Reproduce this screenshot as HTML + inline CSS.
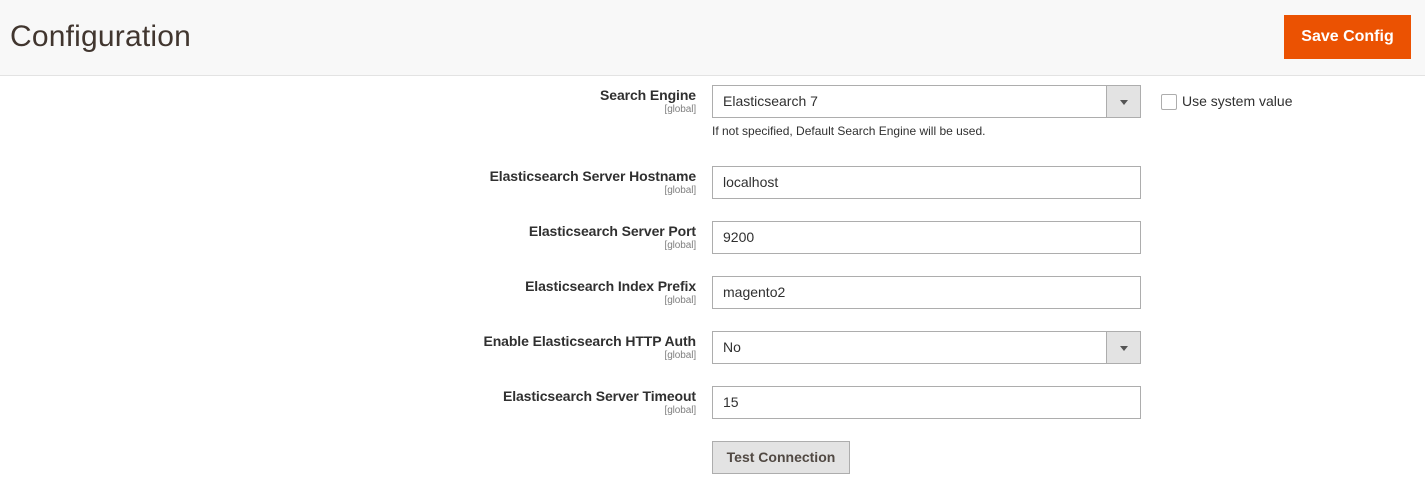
<!DOCTYPE html>
<html><head><style>
body{margin:0;width:1425px;height:486px;background:#fff;font-family:"Liberation Sans",sans-serif;color:#303030;position:relative;overflow:hidden}
.hdr{position:absolute;left:0;top:0;width:1425px;height:75px;background:#f8f8f8;border-bottom:1px solid #e3e3e3}
.title{position:absolute;left:10px;top:20px;font-size:30px;color:#41362f;letter-spacing:0.2px}
.save{position:absolute;left:1284px;top:15px;width:127px;height:44px;background:#eb5202;color:#fff;font-weight:bold;font-size:16px;line-height:44px;text-align:center}
.lab{position:absolute;right:729px;text-align:right;font-weight:bold;font-size:14px;color:#303030;letter-spacing:-0.1px}
.lab small{display:block;font-weight:normal;font-size:10px;color:#808080;margin-top:1px}
.inp{position:absolute;left:712px;height:31px;border:1px solid #adadad;font-size:14px;line-height:31px;padding-left:10px;box-sizing:content-box;width:417px;color:#303030}
.arr{position:absolute;right:0;top:0;width:33px;height:31px;background:#e3e3e3;border-left:1px solid #adadad}
.arr:after{content:"";position:absolute;left:13px;top:14px;border-left:4px solid transparent;border-right:4px solid transparent;border-top:5px solid #555}
</style></head><body>
<div class="hdr"><div class="title">Configuration</div><div class="save">Save Config</div></div>

<div class="lab" style="top:87px">Search Engine<small>[global]</small></div>
<div class="inp" style="top:85px">Elasticsearch 7<div class="arr"></div></div>
<div style="position:absolute;left:1161px;top:94px;width:14px;height:14px;border:1px solid #adadad;border-radius:2px"></div>
<div style="position:absolute;left:1182px;top:93px;font-size:14px">Use system value</div>
<div style="position:absolute;left:712px;top:124px;font-size:12px">If not specified, Default Search Engine will be used.</div>

<div class="lab" style="top:168px">Elasticsearch Server Hostname<small>[global]</small></div>
<div class="inp" style="top:166px">localhost</div>
<div class="lab" style="top:223px">Elasticsearch Server Port<small>[global]</small></div>
<div class="inp" style="top:221px">9200</div>
<div class="lab" style="top:278px">Elasticsearch Index Prefix<small>[global]</small></div>
<div class="inp" style="top:276px">magento2</div>
<div class="lab" style="top:333px">Enable Elasticsearch HTTP Auth<small>[global]</small></div>
<div class="inp" style="top:331px">No<div class="arr"></div></div>
<div class="lab" style="top:388px">Elasticsearch Server Timeout<small>[global]</small></div>
<div class="inp" style="top:386px">15</div>

<div style="position:absolute;left:712px;top:441px;width:136px;height:31px;background:#e3e3e3;border:1px solid #adadad;font-size:14px;font-weight:bold;line-height:31px;text-align:center;color:#514943">Test Connection</div>
</body></html>
